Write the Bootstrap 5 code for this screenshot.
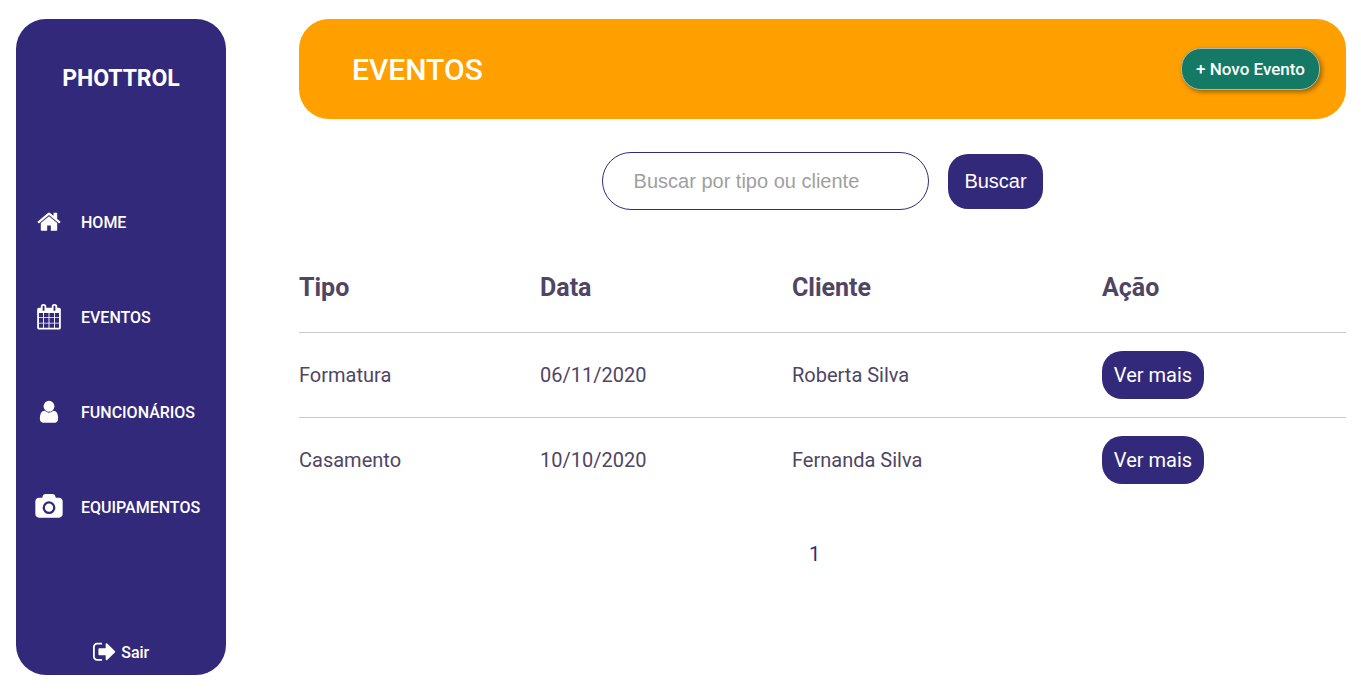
<!DOCTYPE html>
<html lang="pt-BR">
<head>
<meta charset="utf-8">
<meta name="viewport" content="width=device-width, initial-scale=1">
<title>Phottrol - Eventos</title>
<link href="https://cdn.jsdelivr.net/npm/bootstrap@5.3.0/dist/css/bootstrap.min.css" rel="stylesheet">
<style>
:root { --brand: #33297a; --ink: #4f4564; }
body { font-family: Roboto, sans-serif; color: var(--ink); }
.page { height: 693px; padding: 19px 15px 18px 16px; gap: 73px; }
.side { width: 210px; background: var(--brand); border-radius: 30px; }
.logo { font-size: 23px; letter-spacing: -.05px; line-height: 28px; margin-top: 46px; font-weight: 700; }
.menu { margin-top: 82px; }
.menu .nav-link { height: 95px; padding: 0 0 0 17px; font-size: 16px; font-weight: 500; color: #fff; gap: 16px; }
.glyph { width: 32px; height: 25.5px; margin-bottom: 1px; fill: #fff; flex: none; }
.leave { font-size: 16px; line-height: 24px; font-weight: 500; gap: 5px; margin-bottom: 10px; }
.leave svg { width: 23.5px; height: 25.5px; fill: #fff; }
.leave span { padding-top: 2px; }
.banner { height: 100px; background: #ffa000; border-radius: 30px; padding: 0 26px 0 53px; }
.banner h1 { font-size: 30px; font-weight: 500; padding-top: 2px; }
.btn-new { background: #147a66; color: #fff; border: 1px solid #a9b8b8; border-radius: 20px; width: 139px; height: 42px; padding: 1px 0 0; font-size: 17px; font-weight: 500; box-shadow: 2px 2px 5px rgba(0,0,0,.4); }
.search { margin-top: 33px; gap: 19px; font-family: "Liberation Sans", Arial, sans-serif; }
.search .form-control { width: 327px; height: 58px; border: 1px solid var(--brand); border-radius: 30px; padding: 0 30.6px; font-size: 20px; }
.search .form-control::placeholder { color: #a0a0a0; }
.btn-brand, .btn-brand:hover { background: var(--brand); color: #fff; border: 0; border-radius: 20px; font-size: 20px; padding: 0; }
.btn-search { width: 95px; height: 55px; }
.btn-more { width: 102px; height: 48px; }
.events { table-layout: fixed; border-collapse: separate; border-spacing: 0; margin: 32px 0 0; font-size: 20px; --bs-table-color: var(--ink); --bs-table-bg: transparent; color: var(--ink); }
.events th, .events td { padding: 0; height: 85px; vertical-align: middle; border-bottom: 1px solid #c8c8c8; }
.events th { font-size: 25px; height: 91px; padding-top: 2px; }
.events tbody tr:last-child td { border-bottom: 0; height: 84px; }
.pages { margin-top: 36px; padding-right: 16px; font-size: 20px; line-height: 32px; }
.pages a { color: var(--brand); }
</style>
</head>
<body>
<div class="page d-flex">
  <aside class="side d-flex flex-column flex-shrink-0 text-white">
    <div class="logo text-center">PHOTTROL</div>
    <nav class="menu nav flex-column">
      <a class="nav-link d-flex align-items-center" href="#"><svg class="glyph" viewBox="0 0 1792 1792"><path d="M1472 992v480q0 26-19 45t-45 19h-384v-384h-256v384h-384q-26 0-45-19t-19-45v-480q0-1 .5-3t.5-3l575-474 575 474q1 2 1 6zm223-69l-62 74q-8 9-21 11h-3q-13 0-21-7l-692-577-692 577q-12 8-24 7-13-2-21-11l-62-74q-8-10-7-23.5t11-21.5l719-599q32-26 76-26t76 26l244 204v-195q0-14 9-23t23-9h192q14 0 23 9t9 23v408l219 182q10 8 11 21.500t-7 23.500z"/></svg>HOME</a>
      <a class="nav-link d-flex align-items-center" href="#"><svg class="glyph" viewBox="0 0 1792 1792"><path d="M192 1664h288v-288h-288v288zm352 0h320v-288h-320v288zm-352-352h288v-320h-288v320zm352 0h320v-320h-320v320zm-352-384h288v-288h-288v288zm736 736h320v-288h-320v288zm-384-736h320v-288h-320v288zm768 736h288v-288h-288v288zm-384-352h320v-320h-320v320zm-352-864v-288q0-13-9.5-22.5t-22.500-9.500h-64q-13 0-22.500 9.500t-9.500 22.500v288q0 13 9.500 22.500t22.500 9.500h64q13 0 22.500-9.500t9.500-22.500zm736 864h288v-320h-288v320zm-384-384h320v-288h-320v288zm384 0h288v-288h-288v288zm32-480v-288q0-13-9.500-22.500t-22.500-9.500h-64q-13 0-22.500 9.500t-9.500 22.500v288q0 13 9.500 22.500t22.500 9.500h64q13 0 22.500-9.500t9.500-22.500zm384-64v1280q0 52-38 90t-90 38h-1408q-52 0-90-38t-38-90v-1280q0-52 38-90t90-38h128v-96q0-66 47-113t113-47h64q66 0 113 47t47 113v96h384v-96q0-66 47-113t113-47h64q66 0 113 47t47 113v96h128q52 0 90 38t38 90z"/></svg>EVENTOS</a>
      <a class="nav-link d-flex align-items-center" href="#"><svg class="glyph" viewBox="0 0 1792 1792"><path d="M1536 1399q0 109-62.500 187t-150.500 78h-854q-88 0-150.500-78t-62.500-187q0-85 8.500-160.500t31.500-152 58.500-131 94-89 134.500-34.500q131 128 313 128t313-128q76 0 134.500 34.500t94 89 58.500 131 31.500 152 8.500 160.500zm-256-887q0 159-112.500 271.500t-271.500 112.500-271.500-112.500-112.500-271.500 112.500-271.500 271.500-112.500 271.500 112.500 112.500 271.500z"/></svg>FUNCIONÁRIOS</a>
      <a class="nav-link d-flex align-items-center" href="#"><svg class="glyph" viewBox="0 0 1920 1792"><path d="M960 672q119 0 203.500 84.500t84.500 203.500-84.500 203.500-203.500 84.500-203.500-84.500-84.500-203.500 84.500-203.500 203.500-84.500zm704-416q106 0 181 75t75 181v896q0 106-75 181t-181 75h-1408q-106 0-181-75t-75-181v-896q0-106 75-181t181-75h224l51-136q19-49 69.500-84.500t103.500-35.500h512q53 0 103.500 35.500t69.500 84.500l51 136h224zm-704 1152q185 0 316.500-131.500t131.500-316.500-131.500-316.500-316.500-131.500-316.500 131.500-131.500 316.500 131.500 316.500 316.500 131.500z"/></svg>EQUIPAMENTOS</a>
    </nav>
    <a class="leave mt-auto d-flex justify-content-center align-items-center text-white text-decoration-none" href="#"><svg viewBox="0 0 1664 1792"><path d="M640 1440q0 4 1 20t.5 26.500-3 23.500-10 19.500-20.500 6.500h-320q-119 0-203.500-84.500t-84.500-203.500v-704q0-119 84.500-203.500t203.500-84.500h320q13 0 22.500 9.500t9.500 22.500q0 4 1 20t.5 26.500-3 23.500-10 19.500-20.500 6.500h-320q-66 0-113 47t-47 113v704q0 66 47 113t113 47h312l11.500 1 11.500 3 8 5.500 7 9 2 13.500zm928-544q0 26-19 45l-544 544q-19 19-45 19t-45-19-19-45v-288h-448q-26 0-45-19t-19-45v-384q0-26 19-45t45-19h448v-288q0-26 19-45t45-19 45 19l544 544q19 19 19 45z"/></svg><span>Sair</span></a>
  </aside>
  <main class="flex-grow-1">
    <header class="banner d-flex align-items-center justify-content-between">
      <h1 class="m-0 text-white">EVENTOS</h1>
      <button class="btn btn-new" type="button">+ Novo Evento</button>
    </header>
    <form class="search d-flex justify-content-center align-items-center">
      <input class="form-control" type="text" placeholder="Buscar por tipo ou cliente">
      <button class="btn btn-brand btn-search" type="button">Buscar</button>
    </form>
    <table class="events table">
      <colgroup><col style="width:241px"><col style="width:252px"><col style="width:310px"><col style="width:244px"></colgroup>
      <thead><tr><th>Tipo</th><th>Data</th><th>Cliente</th><th>Ação</th></tr></thead>
      <tbody>
        <tr><td>Formatura</td><td>06/11/2020</td><td>Roberta Silva</td><td><button class="btn btn-brand btn-more" type="button">Ver mais</button></td></tr>
        <tr><td>Casamento</td><td>10/10/2020</td><td>Fernanda Silva</td><td><button class="btn btn-brand btn-more" type="button">Ver mais</button></td></tr>
      </tbody>
    </table>
    <div class="pages d-flex justify-content-center"><a class="text-decoration-none" href="#">1</a></div>
  </main>
</div>
<script src="https://cdn.jsdelivr.net/npm/bootstrap@5.3.0/dist/js/bootstrap.bundle.min.js"></script>
</body>
</html>
